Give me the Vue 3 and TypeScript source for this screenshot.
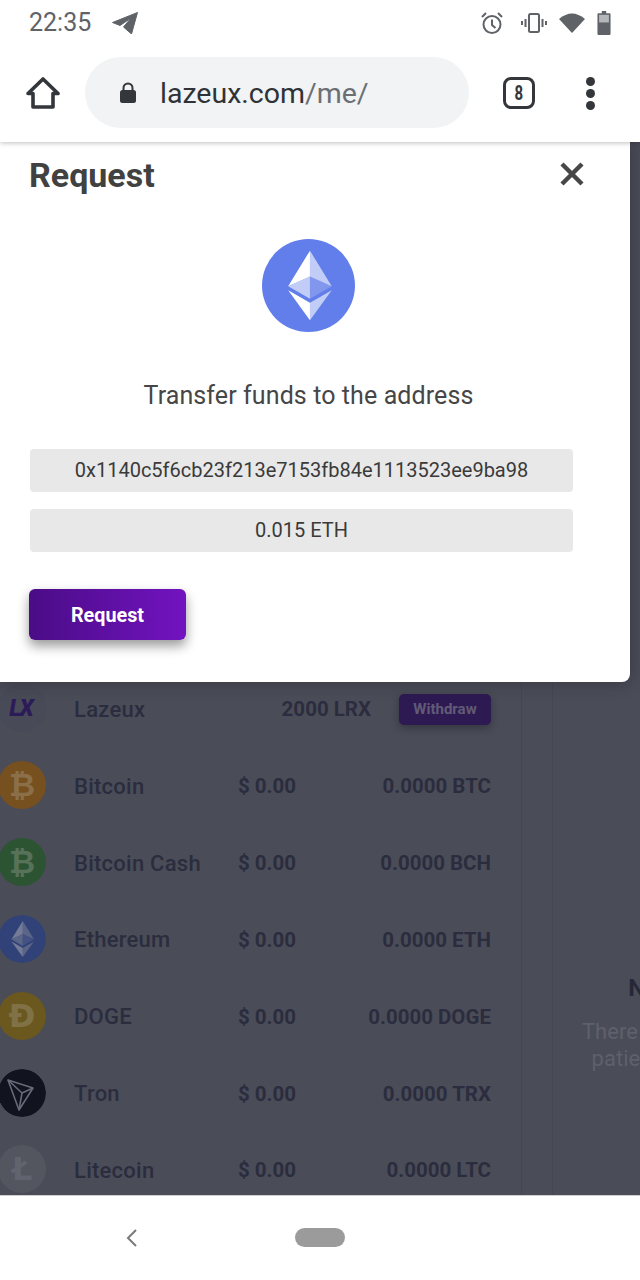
<script setup lang="ts">
interface Coin {
  name: string
  usd: string
  amount: string
  kind: string
  glyph: string
}

const coins: Coin[] = [
  { name: 'Bitcoin', usd: '$ 0.00', amount: '0.0000 BTC', kind: 'btc', glyph: '₿' },
  { name: 'Bitcoin Cash', usd: '$ 0.00', amount: '0.0000 BCH', kind: 'bch', glyph: '₿' },
  { name: 'Ethereum', usd: '$ 0.00', amount: '0.0000 ETH', kind: 'eth', glyph: '' },
  { name: 'DOGE', usd: '$ 0.00', amount: '0.0000 DOGE', kind: 'doge', glyph: 'Ð' },
  { name: 'Tron', usd: '$ 0.00', amount: '0.0000 TRX', kind: 'trx', glyph: '' },
  { name: 'Litecoin', usd: '$ 0.00', amount: '0.0000 LTC', kind: 'ltc', glyph: 'Ł' }
]
</script>

<template>
  <div class="phone">
    <header class="status">
      <div class="status-left">
        <span class="time">22:35</span>
        <svg class="tg" viewBox="0 0 26 22" width="26" height="22">
          <path d="M25.5 0.5 L0.5 10.5 L8 13.5 L19 6 L11.5 15 L19.5 22 Z" fill="#5f6368" stroke="#5f6368" stroke-width="1" stroke-linejoin="round" />
        </svg>
      </div>
      <div class="status-right">
        <svg viewBox="0 0 24 24" width="24" height="24" fill="none" stroke="#5f6368" stroke-width="2">
          <circle cx="12" cy="13.5" r="8.5" />
          <path d="M12 8.5v5.5l3.5 3M2 6l4-4M22 6l-4-4" />
        </svg>
        <svg viewBox="0 0 26 22" width="26" height="22" fill="none" stroke="#5f6368" stroke-width="2">
          <rect x="8" y="2" width="10" height="18" rx="1.5" />
          <path d="M4.5 7v8M1 9v4M21.5 7v8M25 9v4" />
        </svg>
        <svg viewBox="0 0 26 20" width="26" height="20">
          <path d="M0 6 Q13 -5 26 6 L13 20 Z" fill="#5f6368" />
        </svg>
        <svg viewBox="0 0 12 22" width="14" height="24">
          <path d="M4 0h4v2h3a1 1 0 0 1 1 1v18a1 1 0 0 1-1 1H1a1 1 0 0 1-1-1V3a1 1 0 0 1 1-1h3z" fill="#5f6368" />
          <rect x="1.5" y="3.5" width="9" height="7" fill="#b4b6b9" />
        </svg>
      </div>
    </header>

    <nav class="chrome">
      <svg class="home" viewBox="0 0 34 34" width="34" height="34" fill="none" stroke="#33363a" stroke-width="3.6" stroke-linejoin="round">
        <path d="M17 3 L32 17.5 H27 V31 H7 V17.5 H2 Z" />
      </svg>
      <div class="omnibox">
        <svg viewBox="0 0 18 22" width="18" height="22">
          <path d="M4.5 8V6a4.5 4.5 0 0 1 9 0v2" fill="none" stroke="#33363a" stroke-width="2" />
          <rect x="1" y="8" width="16" height="13" rx="2.5" fill="#33363a" />
        </svg>
        <span class="url">lazeux.com<span class="url-path">/me/</span></span>
      </div>
      <div class="tabs"><span>8</span></div>
      <div class="dots"><i></i><i></i><i></i></div>
    </nav>

    <main class="page">
      <div class="backdrop-content">
        <section class="wallet">
          <div class="row">
            <div class="coin lx">LX</div>
            <span class="name">Lazeux</span>
            <span class="lrx">2000 LRX</span>
            <button class="withdraw">Withdraw</button>
          </div>
          <div v-for="c in coins" :key="c.name" class="row">
            <div class="coin" :class="c.kind">
              <svg v-if="c.kind === 'eth'" viewBox="0 0 32 32" width="48" height="48">
                <circle cx="16" cy="16" r="16" fill="#314278" />
                <path d="M16.5 4v8.9l7.5 3.3z" fill="#5a6588" />
                <path d="M16.5 4L9 16.2l7.5-3.3z" fill="#747b96" />
                <path d="M16.5 22v6L24 17.6z" fill="#5a6588" />
                <path d="M16.5 28v-6L9 17.6z" fill="#747b96" />
                <path d="M16.5 20.6l7.5-4.4-7.5-3.3z" fill="#445283" />
                <path d="M9 16.2l7.5 4.4v-7.7z" fill="#5a6588" />
              </svg>
              <svg v-else-if="c.kind === 'trx'" viewBox="0 0 48 48" width="48" height="48" fill="none" stroke="#676a79" stroke-width="1.6" stroke-linejoin="round">
                <circle cx="24" cy="24" r="24" fill="#11131f" stroke="none" />
                <path d="M10 11 L35 19 L21 41 Z" />
                <path d="M10 11 L24 24 L35 19 M24 24 L21 41" />
              </svg>
              <template v-else>{{ c.glyph }}</template>
            </div>
            <span class="name">{{ c.name }}</span>
            <span class="usd">{{ c.usd }}</span>
            <span class="amount">{{ c.amount }}</span>
          </div>
        </section>
        <aside class="history">
          <h3>No transactions</h3>
          <p>There are no entries yet, be<br />patient and try that again</p>
        </aside>
      </div>

      <section class="modal">
        <div class="modal-head">
          <h2>Request</h2>
          <svg viewBox="0 0 24 24" width="24" height="24" stroke="#474747" stroke-width="4.4" fill="none">
            <path d="M2 2 L22 22 M22 2 L2 22" />
          </svg>
        </div>
        <svg class="eth-big" viewBox="0 0 32 32" width="93" height="93">
          <circle cx="16" cy="16" r="16" fill="#627eea" />
          <path d="M16.498 4v8.87l7.497 3.35z" fill="#fff" fill-opacity=".602" />
          <path d="M16.498 4L9 16.22l7.498-3.35z" fill="#fff" />
          <path d="M16.498 21.968v6.027L24 17.616z" fill="#fff" fill-opacity=".602" />
          <path d="M16.498 27.995v-6.028L9 17.616z" fill="#fff" />
          <path d="M16.498 20.573l7.497-4.353-7.497-3.348z" fill="#fff" fill-opacity=".2" />
          <path d="M9 16.22l7.498 4.353v-7.701z" fill="#fff" fill-opacity=".602" />
        </svg>
        <p class="lead">Transfer funds to the address</p>
        <div class="field">0x1140c5f6cb23f213e7153fb84e1113523ee9ba98</div>
        <div class="field">0.015 ETH</div>
        <button class="request">Request</button>
      </section>
    </main>

    <footer class="navbar">
      <svg viewBox="0 0 12 20" width="12" height="20" fill="none" stroke="#7a7a7a" stroke-width="2">
        <path d="M11 2 L3 10 L11 18" />
      </svg>
      <div class="pill"></div>
    </footer>
  </div>
</template>

<style>
html, body { margin: 0; padding: 0; background: #fff; }
</style>

<style scoped>
.phone {
  width: 640px;
  height: 1280px;
  display: flex;
  flex-direction: column;
  overflow: hidden;
  font-family: Roboto, "Liberation Sans", sans-serif;
  background: #fff;
}
.status {
  height: 47px;
  flex: none;
  display: flex;
  justify-content: space-between;
  align-items: center;
  padding: 0 29px 2px 29px;
  box-sizing: border-box;
  position: relative;
  z-index: 3;
  background: #fff;
}
.status-left { display: flex; align-items: center; gap: 21px; }
.time { font-size: 25px; color: #5f6368; }
.status-right { display: flex; align-items: center; gap: 12px; }
.status-right svg:first-child { margin-right: 5px; }
.chrome {
  height: 95px;
  flex: none;
  display: flex;
  align-items: center;
  box-sizing: border-box;
  padding: 0 0 4px 26px;
  position: relative;
  z-index: 2;
  background: #fff;
  box-shadow: 0 1px 5px rgba(0, 0, 0, 0.25);
}
.home { flex: none; }
.omnibox {
  width: 384px;
  height: 71px;
  margin-left: 25px;
  border-radius: 36px;
  background: #f1f3f4;
  display: flex;
  align-items: center;
  gap: 23px;
  padding-left: 34px;
  box-sizing: border-box;
  flex: none;
}
.url { font-size: 28.5px; color: #2f3236; padding-top: 1px; }
.url-path { color: #6b6f74; }
.tabs {
  width: 32px;
  height: 32px;
  margin-left: 34px;
  border: 3px solid #33363a;
  border-radius: 8px;
  box-sizing: border-box;
  flex: none;
  display: flex;
  align-items: center;
  justify-content: center;
  font-size: 20px;
  font-weight: 700;
  color: #33363a;
}
.tabs span { display: block; transform: scaleX(0.75); }
.dots {
  display: flex;
  flex-direction: column;
  gap: 3px;
  margin: 2px 0 0 51px;
}
.dots i {
  display: block;
  width: 9px;
  height: 9px;
  border-radius: 50%;
  background: #33363a;
}
.page {
  flex: 1;
  position: relative;
  overflow: hidden;
  background: #4a4c58;
}
.backdrop-content {
  display: flex;
  width: 900px;
  height: 100%;
}
.wallet {
  width: 522px;
  flex: none;
  box-sizing: border-box;
  padding: 528px 30px 0 0;
  border-right: 1px solid #454753;
}
.row {
  height: 76.85px;
  display: flex;
  align-items: center;
  color: #2b2d3e;
  font-size: 21px;
  font-weight: 700;
  white-space: nowrap;
}
.coin {
  width: 48px;
  height: 48px;
  margin-left: -2px;
  margin-right: 28px;
  border-radius: 50%;
  flex: none;
  display: flex;
  align-items: center;
  justify-content: center;
  font-family: "DejaVu Sans", sans-serif;
  font-size: 32px;
  font-weight: 700;
  overflow: hidden;
}
.lx {
  background: #484a57;
  color: #2c1b58;
  font-family: Roboto, sans-serif;
  font-size: 23px;
  font-style: italic;
  font-weight: 900;
  letter-spacing: -2px;
  padding-right: 3px;
  box-sizing: border-box;
}
.btc { background: #76501f; color: #8b6f49; }
.bch { background: #2c5433; color: #587159; }
.doge { background: #6a581f; color: #807147; }
.ltc { background: #53555f; color: #61636e; }
.name, .usd, .amount, .lrx { padding-top: 2px; }
.name { width: 164px; flex: none; font-size: 22px; font-weight: 500; letter-spacing: 0.25px; }
.usd { width: 57px; flex: none; text-align: right; font-size: 20.5px; }
.amount { flex: 1; text-align: right; font-size: 20.5px; }
.lrx { flex: 1; text-align: right; margin-right: 28px; font-size: 20.5px; }
.withdraw {
  width: 92px;
  height: 31px;
  margin-top: 2px;
  flex: none;
  border: 0;
  border-radius: 5px;
  background: #2d1a52;
  color: #625a76;
  font-family: Roboto, sans-serif;
  font-size: 15px;
  font-weight: 700;
  box-shadow: 0 3px 8px rgba(0, 0, 0, 0.3);
  padding: 0;
}
.history {
  width: 300px;
  flex: none;
  margin-left: 30px;
  padding: 830px 0 0 22px;
  border-left: 1px solid #454753;
  text-align: center;
  box-sizing: border-box;
}
.history h3 {
  margin: 0 0 14px;
  font-size: 24px;
  line-height: 32px;
  font-weight: 700;
  color: #262838;
}
.history p {
  margin: 0;
  font-size: 22px;
  line-height: 27px;
  color: #5e606c;
}
.modal {
  position: absolute;
  top: 0;
  left: 0;
  width: 630px;
  height: 540px;
  box-sizing: border-box;
  background: #fff;
  border-radius: 0 0 8px 0;
  box-shadow: 0 0 18px rgba(0, 0, 0, 0.3);
  padding: 0 57px 0 30px;
  display: flex;
  flex-direction: column;
}
.modal-head {
  height: 66px;
  display: flex;
  align-items: center;
  justify-content: space-between;
  margin-right: -27px;
  padding-right: 16px;
  flex: none;
}
.modal-head svg { margin-bottom: 2px; }
.modal-head h2 {
  margin: 0 0 0 -1px;
  font-size: 34px;
  font-weight: 700;
  color: #414141;
}
.eth-big {
  align-self: center;
  margin: 31px 0 0 14px;
  flex: none;
}
.lead {
  margin: 46px -14px 0 0;
  height: 36px;
  line-height: 36px;
  text-align: center;
  font-size: 25px;
  letter-spacing: 0.1px;
  color: #464646;
}
.field {
  height: 43px;
  line-height: 42px;
  margin-top: 17px;
  background: #e8e8e8;
  border-radius: 4px;
  text-align: center;
  font-size: 20px;
  color: #3a3a3a;
}
.lead + .field { margin-top: 35px; }
.request {
  width: 157px;
  height: 51px;
  margin: 37px 0 0 -1px;
  padding: 1px 0 0;
  border: 0;
  border-radius: 6px;
  background: linear-gradient(90deg, #4a0c86, #7213c0);
  color: #fff;
  font-family: Roboto, sans-serif;
  font-size: 19.8px;
  font-weight: 700;
  box-shadow: 0 6px 12px rgba(0, 0, 0, 0.4);
  flex: none;
}
.navbar {
  height: 85px;
  flex: none;
  position: relative;
  display: flex;
  align-items: center;
  box-sizing: border-box;
  padding: 0 0 1px 125px;
  background: #fff;
  border-top: 1px solid #d0d0d4;
}
.pill {
  width: 50px;
  height: 19px;
  border-radius: 10px;
  background: #9b9b9b;
  margin-left: 158px;
}
</style>
